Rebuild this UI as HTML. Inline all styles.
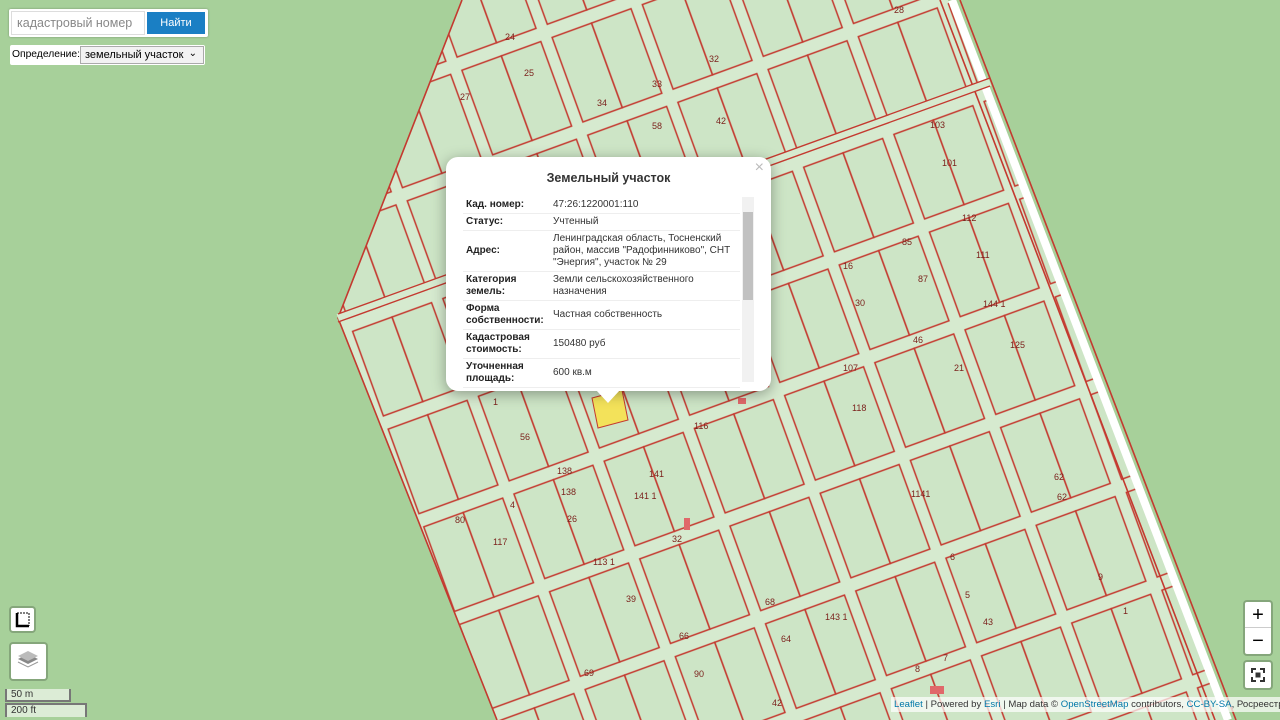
<!DOCTYPE html>
<html><head><meta charset="utf-8">
<style>
*{box-sizing:border-box}
html,body{margin:0;width:1280px;height:720px;overflow:hidden}
body{position:relative;background:#a7d09a;font-family:"Liberation Sans",Arial,sans-serif}
svg.map{position:absolute;left:0;top:0}
.search{position:absolute;left:9px;top:9px;width:199px;height:28px;background:#fff;border-radius:2px;box-shadow:0 0 2px rgba(0,0,0,.3)}
.search .inp{position:absolute;left:2px;top:2px;width:134px;height:24px;border:1px solid #ddd;color:#888;font-size:12.5px;padding:4px 5px}
.search .btn{position:absolute;left:138px;top:3px;width:58px;height:22px;background:#1a7fc4;color:#fff;font-size:11px;text-align:center;line-height:22px}
.def{position:absolute;left:10px;top:45px;width:195px;height:20px;background:#fff;border-radius:2px;font-size:10.3px;line-height:20px;padding-left:2px;color:#000;white-space:nowrap}
.def .sel{position:absolute;left:70px;top:1px;width:124px;height:18px;border:1px solid #aaa;background:#f2f2f2;font-size:11px;line-height:16px;padding-left:4px}
.def .sel span{position:absolute;right:6px;top:-1px;font-size:10px}
.popup{position:absolute;left:446px;top:157px;width:325px;height:234px;background:#fff;border-radius:12px;box-shadow:0 3px 14px rgba(0,0,0,.35)}
.tip{position:absolute;left:596px;top:390px;width:0;height:0;border-left:12px solid transparent;border-right:12px solid transparent;border-top:13px solid #fff}
.popup h3{margin:0;position:absolute;top:14px;width:100%;text-align:center;font-size:12.5px;color:#333}
.popup .x{position:absolute;right:7px;top:2px;color:#bbb;font-size:16px}
.popup table{position:absolute;left:17px;top:40px;width:277px;border-collapse:collapse;font-size:10px;color:#333}
.popup td{border-bottom:1px solid #eee;padding:2px 3px;vertical-align:middle;line-height:12px}
.popup td.k{font-weight:bold;color:#222;width:87px}
.sb{position:absolute;left:296px;top:40px;width:12px;height:185px;background:#f1f1f1}
.sb i{position:absolute;left:1px;top:15px;width:10px;height:88px;background:#c1c1c1}
.ctl{position:absolute;background:#fff;border-radius:4px;border:2px solid rgba(0,0,0,.2);background-clip:padding-box}
.attr{position:absolute;left:891px;top:697px;width:389px;height:15px;background:rgba(255,255,255,.7);font-size:9.6px;color:#333;padding-left:3px;line-height:15px;white-space:nowrap;overflow:hidden}
.attr a{color:#0078a8;text-decoration:none}
.scale{position:absolute;left:5px;border:2px solid #777;border-top:none;background:rgba(255,255,255,.6);font-size:10px;height:13px;line-height:12px;padding-left:4px;color:#333}
</style></head><body>
<svg class="map" width="1280" height="720">
<defs>
<pattern id="p" width="96" height="104" patternUnits="userSpaceOnUse" patternTransform="rotate(-20) translate(20,10)">
<rect width="96" height="104" fill="#d6eacf"/>
<rect x="6" y="6" width="42" height="90" fill="#cde5c6" stroke="#c4392f" stroke-width="1.5"/>
<rect x="48" y="6" width="42" height="90" fill="#cde5c6" stroke="#c4392f" stroke-width="1.5"/>
</pattern>
</defs>
<polygon points="462,0 948,0 1228,720 497,720 338,318" fill="url(#p)"/>
<polyline points="462,0 338,318 497,720" fill="none" stroke="#c4392f" stroke-width="1.6"/>
<line x1="940" y1="0" x2="1215" y2="720" stroke="#c4392f" stroke-width="1.6"/>
<line x1="952" y1="0" x2="1228" y2="720" stroke="#fff" stroke-width="8"/>
<line x1="960" y1="0" x2="1236" y2="720" stroke="#c4392f" stroke-width="1.6"/>
<line x1="338" y1="318" x2="990" y2="82" stroke="#d6eacf" stroke-width="8"/>
<line x1="338" y1="314" x2="990" y2="78" stroke="#c4392f" stroke-width="1.4"/>
<line x1="338" y1="322" x2="990" y2="86" stroke="#c4392f" stroke-width="1.4"/>
<polygon points="592,398 622,390 628,420 598,428" fill="#f3e25a" stroke="#c4392f"/>
<rect x="738" y="398" width="8" height="6" fill="#e0686a"/>
<rect x="684" y="518" width="6" height="12" fill="#e0686a"/>
<rect x="930" y="686" width="14" height="8" fill="#e0686a"/>
<g font-size="9" fill="#7a1f1a" font-family="Liberation Sans">
<text x="505" y="40">24</text><text x="524" y="76">25</text><text x="460" y="100">27</text><text x="652" y="87">33</text><text x="709" y="62">32</text><text x="597" y="106">34</text><text x="652" y="129">58</text><text x="716" y="124">42</text><text x="894" y="13">28</text>
<text x="930" y="128">103</text><text x="942" y="166">101</text><text x="962" y="221">112</text><text x="976" y="258">111</text><text x="902" y="245">85</text><text x="918" y="282">87</text><text x="843" y="269">16</text><text x="855" y="306">30</text><text x="983" y="307">144 1</text><text x="1010" y="348">125</text><text x="913" y="343">46</text><text x="954" y="371">21</text><text x="843" y="371">107</text><text x="852" y="411">118</text><text x="694" y="429">116</text><text x="649" y="477">141</text><text x="634" y="499">141 1</text><text x="557" y="474">138</text><text x="561" y="495">138</text><text x="567" y="522">26</text><text x="510" y="508">4</text><text x="455" y="523">80</text><text x="493" y="545">117</text><text x="593" y="565">113 1</text><text x="626" y="602">39</text><text x="672" y="542">32</text><text x="765" y="605">68</text><text x="781" y="642">64</text><text x="679" y="639">66</text><text x="694" y="677">90</text><text x="584" y="676">69</text><text x="772" y="706">42</text><text x="825" y="620">143 1</text><text x="950" y="560">6</text><text x="965" y="598">5</text><text x="911" y="497">1141</text><text x="983" y="625">43</text><text x="1098" y="580">9</text><text x="1123" y="614">1</text><text x="1054" y="480">62</text><text x="1057" y="500">62</text><text x="493" y="405">1</text><text x="520" y="440">56</text><text x="915" y="672">8</text><text x="943" y="661">7</text>
</g>
</svg>

<div class="search"><div class="inp">кадастровый номер</div><div class="btn">Найти</div></div>
<div class="def">Определение:<div class="sel">земельный участок<span>&#8964;</span></div></div>

<div class="popup">
<div class="x">×</div>
<h3>Земельный участок</h3>
<table>
<tr><td class="k">Кад. номер:</td><td>47:26:1220001:110</td></tr>
<tr><td class="k">Статус:</td><td>Учтенный</td></tr>
<tr><td class="k">Адрес:</td><td>Ленинградская область, Тосненский район, массив "Радофинниково", СНТ "Энергия", участок № 29</td></tr>
<tr><td class="k">Категория земель:</td><td>Земли сельскохозяйственного назначения</td></tr>
<tr><td class="k">Форма собственности:</td><td>Частная собственность</td></tr>
<tr><td class="k">Кадастровая стоимость:</td><td>150480 руб</td></tr>
<tr><td class="k">Уточненная площадь:</td><td>600 кв.м</td></tr>
</table>
<div class="sb"><i></i></div>
</div>
<div class="tip"></div>

<div class="ctl" style="left:9px;top:606px;width:27px;height:27px"><svg width="23" height="23"><path d="M6 5v13h12" stroke="#000" stroke-width="2.5" fill="none"/><path d="M6 5h12v13" stroke="#000" stroke-width="1" stroke-dasharray="2 1" fill="none"/></svg></div>
<div class="ctl" style="left:9px;top:642px;width:39px;height:39px"><svg width="35" height="35"><path d="M17 20l10-5-10-5-10 5z" fill="#888"/><path d="M17 17l10-5-10-5-10 5z" fill="#bbb"/><path d="M7 18l10 5 10-5" fill="none" stroke="#999"/></svg></div>
<div class="scale" style="top:689px;width:66px">50 m</div>
<div class="scale" style="top:703px;width:82px;border-top:2px solid #777;border-bottom:none;height:14px">200 ft</div>

<div class="ctl" style="left:1243px;top:600px;width:30px;height:56px"><div style="height:26px;text-align:center;font-size:20px;line-height:26px;border-bottom:1px solid #ccc">+</div><div style="text-align:center;font-size:20px;line-height:26px">−</div></div>
<div class="ctl" style="left:1243px;top:660px;width:30px;height:30px"><svg width="26" height="26"><path d="M7 11V7h4M15 7h4v4M19 15v4h-4M11 19H7v-4" stroke="#333" stroke-width="2" fill="none"/><rect x="10.5" y="10.5" width="5" height="5" fill="#333"/></svg></div>
<div class="attr"><a>Leaflet</a> | Powered by <a>Esri</a> | Map data © <a>OpenStreetMap</a> contributors, <a>CC-BY-SA</a>, Росреестр</div>
</body></html>
